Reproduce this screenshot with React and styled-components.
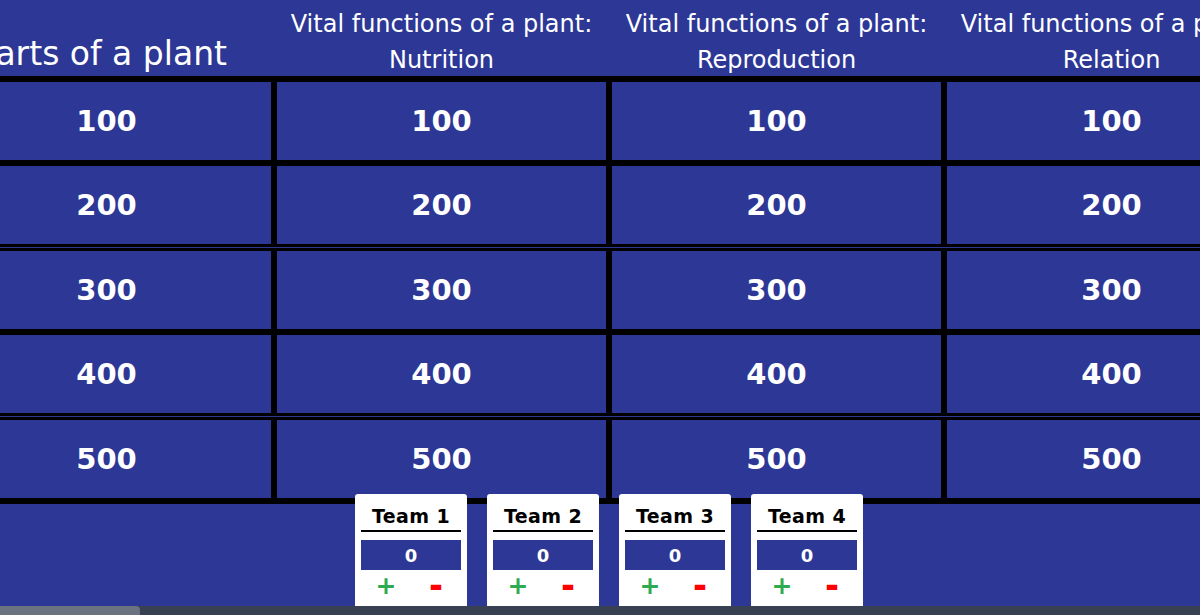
import React from "react";
import styled, { createGlobalStyle } from "styled-components";

const BLUE = "#2c3796";

const GlobalStyle = createGlobalStyle`
  html, body {
    margin: 0;
    padding: 0;
    background: ${BLUE};
    overflow: hidden;
    font-family: "DejaVu Sans", Verdana, sans-serif;
  }
`;

const Page = styled.div`
  position: relative;
  width: 1200px;
  height: 615px;
  display: flex;
  flex-direction: column;
  overflow: hidden;
  background: ${BLUE};
`;

// the board is wider than the window and scrolled a little to the right
const Board = styled.div`
  margin-left: -58px;
  width: 1334px;
  display: flex;
  flex-direction: column;
`;

const Row = styled.div`
  display: grid;
  grid-template-columns: repeat(4, 329px);
  column-gap: 6px;
  height: ${(p) => (p.$header ? "76px" : "78px")};
  background: ${(p) => (p.$header ? BLUE : "#000")};
`;

const HeadCell = styled.div`
  display: flex;
  flex-direction: column;
  justify-content: flex-end;
  align-items: center;
  margin-bottom: -2px;
  padding-right: ${(p) => (p.$big ? "9px" : "0")};
  color: #fff;
  text-align: center;
  white-space: nowrap;
  font-size: ${(p) => (p.$big ? "33px" : "24px")};
  line-height: ${(p) => (p.$big ? "48px" : "36px")};
`;

const Cell = styled.div`
  display: flex;
  align-items: center;
  justify-content: center;
  background: ${BLUE};
  color: #fff;
  font-size: 29px;
  font-weight: bold;
  cursor: pointer;
`;

const Divider = styled.div`
  height: ${(p) => (p.$double ? "7px" : "6px")};
  background: ${(p) =>
    p.$double
      ? `linear-gradient(to bottom, #000 0 3px, ${BLUE} 3px 4px, #000 4px 7px)`
      : "#000"};
`;

const Teams = styled.div`
  position: absolute;
  left: 355px;
  top: 494px;
  display: flex;
  gap: 20px;
`;

const Card = styled.div`
  width: 112px;
  height: 112px;
  box-sizing: border-box;
  padding: 10px 6px 0;
  background: #fff;
  border-radius: 3px 3px 0 0;
  display: flex;
  flex-direction: column;
`;

const TeamName = styled.div`
  font-size: 19px;
  letter-spacing: 0.4px;
  font-weight: bold;
  line-height: 24px;
  color: #000;
  text-align: center;
  padding-bottom: 2px;
  border-bottom: 2px solid #000;
`;

const Score = styled.div`
  margin-top: 8px;
  height: 30px;
  background: ${BLUE};
  color: #fff;
  font-size: 18px;
  font-weight: bold;
  display: flex;
  align-items: center;
  justify-content: center;
`;

const Buttons = styled.div`
  display: grid;
  grid-template-columns: 1fr 1fr;
  height: 30px;
`;

const Btn = styled.span`
  display: flex;
  align-items: center;
  justify-content: center;
  font-weight: bold;
  font-size: ${(p) => (p.$minus ? "26px" : "25px")};
  color: ${(p) => (p.$minus ? "#f00" : "#2eaa50")};
  cursor: pointer;
  transform: ${(p) => (p.$minus ? "scale(1.3, 1.4)" : "none")};
`;

const Track = styled.div`
  position: relative;
  z-index: 2;
  margin-top: auto;
  height: 9px;
  background: #374151;
`;

const Thumb = styled.div`
  width: 140px;
  height: 100%;
  background: #6b7280;
  border-top-right-radius: 4px;
`;

const categories = [
  { lines: ["Parts of a plant"], big: true },
  { lines: ["Vital functions of a plant:", "Nutrition"] },
  { lines: ["Vital functions of a plant:", "Reproduction"] },
  { lines: ["Vital functions of a plant:", "Relation"] },
];

const values = [100, 200, 300, 400, 500];
const teams = ["Team 1", "Team 2", "Team 3", "Team 4"];

export default function App() {
  return (
    <>
      <GlobalStyle />
      <Page>
        <Board>
          <Row $header>
            {categories.map((c, i) => (
              <HeadCell key={i} $big={c.big}>
                {c.lines.map((l) => (
                  <span key={l}>{l}</span>
                ))}
              </HeadCell>
            ))}
          </Row>
          {values.map((v, i) => (
            <React.Fragment key={v}>
              <Divider $double={i === 2 || i === 4} />
              <Row>
                {categories.map((c, j) => (
                  <Cell key={j}>{v}</Cell>
                ))}
              </Row>
            </React.Fragment>
          ))}
          <Divider />
        </Board>
        <Teams>
          {teams.map((t) => (
            <Card key={t}>
              <TeamName>{t}</TeamName>
              <Score>0</Score>
              <Buttons>
                <Btn>+</Btn>
                <Btn $minus>-</Btn>
              </Buttons>
            </Card>
          ))}
        </Teams>
        <Track>
          <Thumb />
        </Track>
      </Page>
    </>
  );
}
